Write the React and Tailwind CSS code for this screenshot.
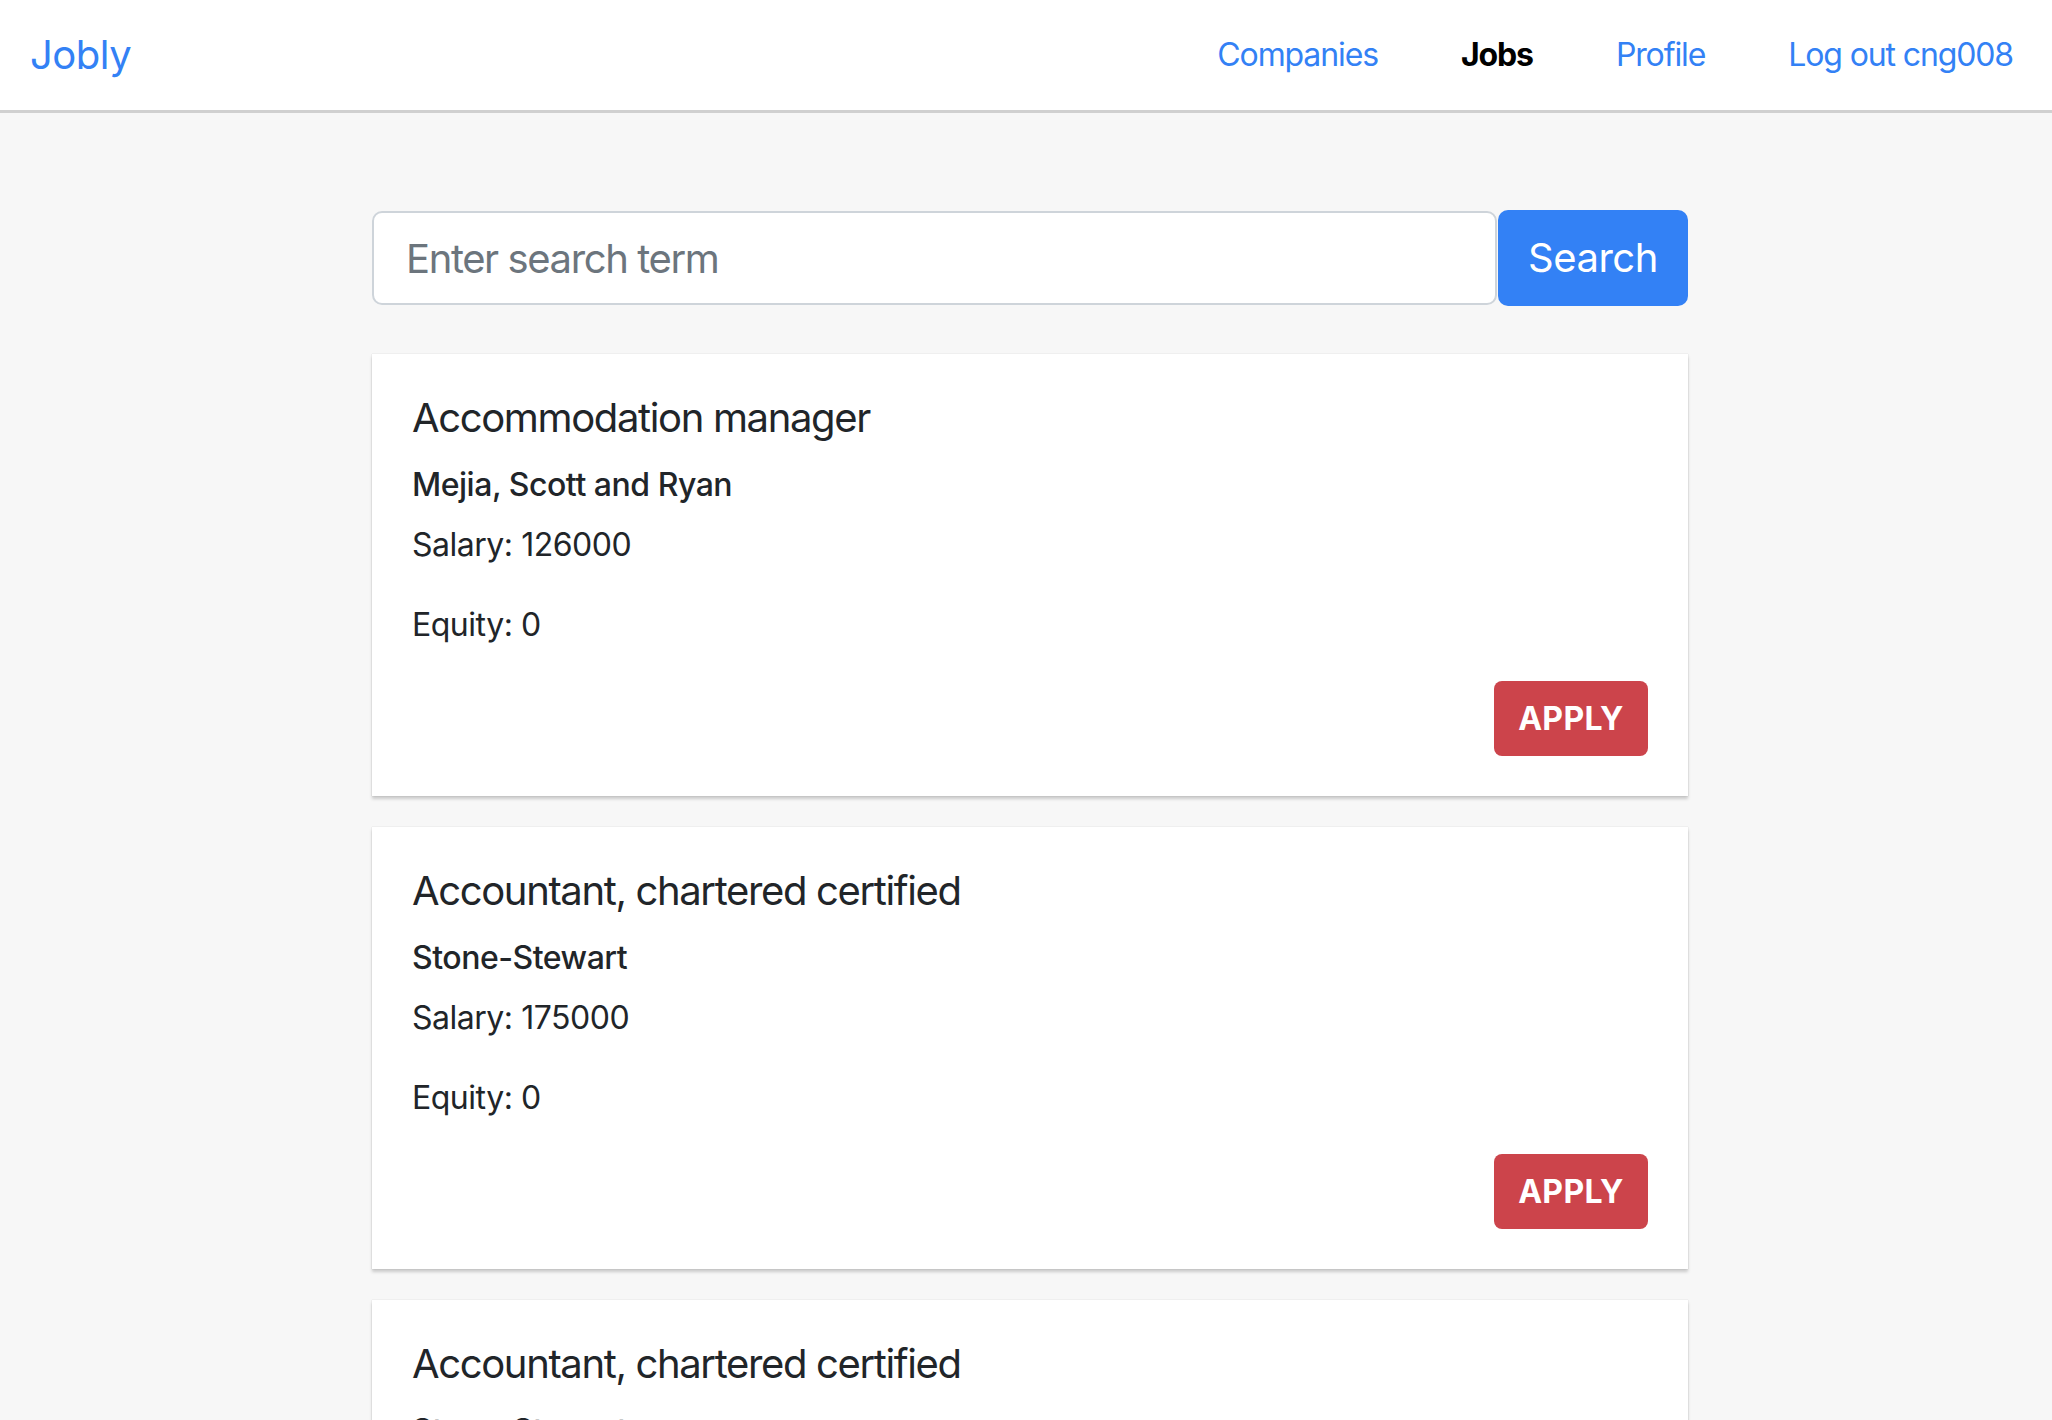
import React from 'react';

const jobs = [
  { title: 'Accommodation manager', company: 'Mejia, Scott and Ryan', salary: 126000, equity: 0 },
  { title: 'Accountant, chartered certified', company: 'Stone-Stewart', salary: 175000, equity: 0 },
  { title: 'Accountant, chartered certified', company: 'Stone-Stewart', salary: 152000, equity: 0 },
];

const NavBar = () => (
  <nav className="flex h-[113px] items-center justify-between border-b-[3px] border-[#d0d0d0] bg-white pl-[30px] pr-[39px]">
    <a className="text-[40px] leading-none text-[#3381f5]">Jobly</a>
    <div className="flex items-center gap-[83px] text-[32px] leading-none tracking-[-0.035em]">
      <a className="text-[#3381f5]">Companies</a>
      <a className="font-bold text-black">Jobs</a>
      <a className="text-[#3381f5]">Profile</a>
      <a className="text-[#3381f5]">Log out cng008</a>
    </div>
  </nav>
);

const JobCard = ({ job }) => (
  <div className="mb-[31px] bg-white px-[40px] pt-[40px] pb-[40px] shadow-[0_0_1px_rgba(0,0,0,0.2),0_3px_3px_rgba(0,0,0,0.18)]">
    <h5 className="text-[40px] leading-[48px] tracking-[-0.034em] text-[#212529]">{job.title}</h5>
    <h6 className="mt-[24px] text-[32px] font-medium leading-[38px] text-[#212529]">{job.company}</h6>
    <p className="mt-[17px] text-[32px] leading-[48px] text-[#212529]">Salary: {job.salary}</p>
    <p className="mt-[32px] text-[32px] leading-[48px] text-[#212529]">Equity: {job.equity}</p>
    <div className="mt-[32px] flex justify-end">
      <button className="h-[75px] w-[154px] rounded-[8px] bg-[#cc444b] text-[32px] font-bold tracking-[0.01em] text-white">
        APPLY
      </button>
    </div>
  </div>
);

export default function App() {
  return (
    <div className="min-h-screen bg-[#f7f7f7] font-['Inter',sans-serif] tracking-[-0.03em] text-[#212529]">
      <NavBar />
      <main className="ml-[372px] w-[1316px] pt-[98px]">
        <form className="mb-[48px] flex" onSubmit={(e) => e.preventDefault()}>
          <input
            className="h-[94px] flex-1 rounded-[10px] border-2 border-[#ced4da] bg-white px-[32px] text-[40px] tracking-[-0.035em] text-[#495057] placeholder:text-[#6c757d] outline-none"
            placeholder="Enter search term"
          />
          <button className="ml-[1px] h-[96px] w-[190px] -mt-[1px] rounded-[10px] bg-[#3381f5] text-[40px] text-white">
            Search
          </button>
        </form>
        {jobs.map((job, idx) => (
          <JobCard key={idx} job={job} />
        ))}
      </main>
    </div>
  );
}
